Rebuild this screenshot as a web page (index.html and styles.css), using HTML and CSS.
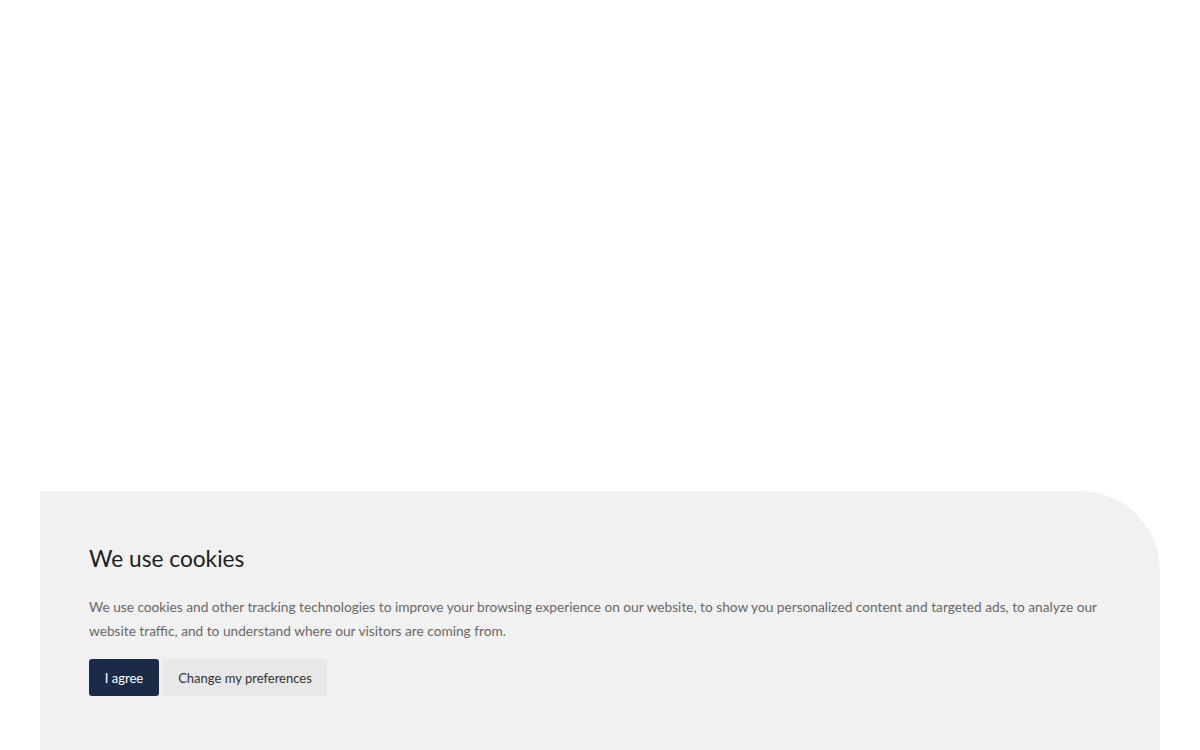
FILE: index.html
```html
<!DOCTYPE html>
<html lang="en">
<head>
<meta charset="utf-8">
<title>Cookies</title>
<link rel="stylesheet" href="styles.css">
</head>
<body>
<div class="page">
  <div class="spacer"></div>
  <section class="banner">
    <h2 class="title">We use cookies</h2>
    <p class="text">We use cookies and other tracking technologies to improve your browsing experience on our website, to show you personalized content and targeted ads, to analyze our website traffic, and to understand where our visitors are coming from.</p>
    <div class="actions">
      <button class="btn btn-primary">I agree</button>
      <button class="btn btn-secondary">Change my preferences</button>
    </div>
  </section>
</div>
</body>
</html>
```
FILE: styles.css
```css
html, body {
  margin: 0;
  padding: 0;
  background: #ffffff;
  height: 100%;
  overflow: hidden;
}
.page {
  height: 750px;
  display: flex;
  flex-direction: column;
  padding: 0 40px;
  box-sizing: border-box;
}
.spacer {
  height: 491px;
  flex: none;
}
.banner {
  flex: 1;
  background: #f1f1f1;
  border-top-right-radius: 80px;
  padding: 50px 49px 0 49px;
  font-family: Lato, "Open Sans", sans-serif;
}
.title {
  margin: 0;
  font-weight: 400;
  font-size: 22.7px;
  line-height: 36px;
  color: #1e1e1e;
}
.text {
  margin: 18px 0 0 0;
  font-size: 13.7px;
  line-height: 24px;
  color: #686868;
  font-weight: 400;
  max-width: 1030px;
}
.actions {
  display: flex;
  gap: 4px;
  margin-top: 16px;
}
.btn {
  border: 0;
  height: 37px;
  padding: 0;
  font-family: Lato, "Open Sans", sans-serif;
  font-size: 13px;
  cursor: pointer;
}
.btn-primary {
  background: #1b2a47;
  color: #ffffff;
  border-radius: 3px;
  width: 70px;
}
.btn-secondary {
  background: #e8e8e8;
  color: #333333;
  width: 164px;
}
```
